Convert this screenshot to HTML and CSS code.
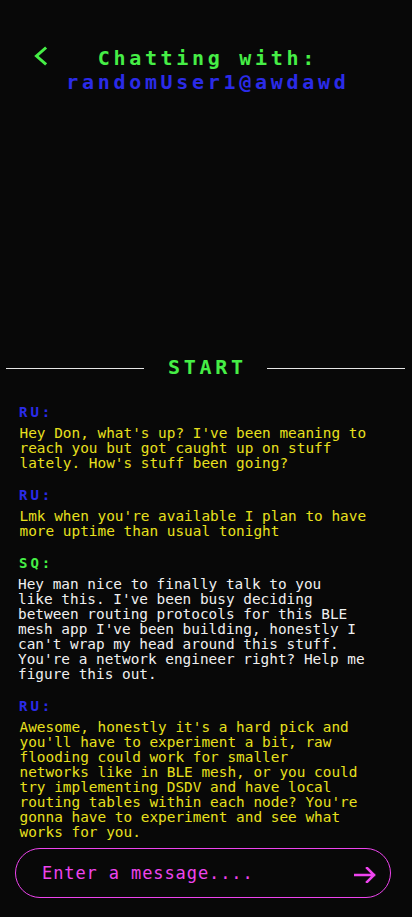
FILE: index.html
```html
<!DOCTYPE html>
<html lang="en">
<head>
<meta charset="utf-8">
<title>Chat</title>
<link rel="stylesheet" href="styles.css">
</head>
<body>
<div class="app">
  <header class="header">
    <button class="back" aria-label="Back">
      <svg width="14" height="20" viewBox="0 0 14 20"><polyline points="12,2.5 3.5,10 12,17.5" fill="none" stroke="#46ee46" stroke-width="3" stroke-linecap="square" stroke-linejoin="miter"/></svg>
    </button>
    <div class="title">
      <div class="title-top">Chatting with:</div>
      <div class="title-user">randomUser1@awdawd</div>
    </div>
    <div class="spacer"></div>
  </header>

  <main class="chat">
    <div class="start-row">
      <span class="rule"></span>
      <span class="start">START</span>
      <span class="rule"></span>
    </div>
    <div class="messages">
      <div class="msg">
        <div class="sender sender-ru">RU:</div>
        <p class="text text-them">Hey Don, what's up? I've been meaning to<br>reach you but got caught up on stuff<br>lately. How's stuff been going?</p>
      </div>
      <div class="msg">
        <div class="sender sender-ru">RU:</div>
        <p class="text text-them">Lmk when you're available I plan to have<br>more uptime than usual tonight</p>
      </div>
      <div class="msg">
        <div class="sender sender-sq">SQ:</div>
        <p class="text text-me">Hey man nice to finally talk to you<br>like this. I've been busy deciding<br>between routing protocols for this BLE<br>mesh app I've been building, honestly I<br>can't wrap my head around this stuff.<br>You're a network engineer right? Help me<br>figure this out.</p>
      </div>
      <div class="msg">
        <div class="sender sender-ru">RU:</div>
        <p class="text text-them">Awesome, honestly it's a hard pick and<br>you'll have to experiment a bit, raw<br>flooding could work for smaller<br>networks like in BLE mesh, or you could<br>try implementing DSDV and have local<br>routing tables within each node? You're<br>gonna have to experiment and see what<br>works for you.</p>
      </div>
    </div>
  </main>

  <footer class="composer">
    <div class="input-wrap">
      <input class="input" type="text" placeholder="Enter a message....">
      <button class="send" aria-label="Send">
        <svg width="22" height="16" viewBox="0 0 22 16"><path d="M0.5 8 H20 M13 1 L20 8 L13 15" fill="none" stroke="#ee44ee" stroke-width="2.5" stroke-linecap="square" stroke-linejoin="miter"/></svg>
      </button>
    </div>
  </footer>
</div>
</body>
</html>
```

FILE: styles.css
```css
* { box-sizing: border-box; }

html, body {
  margin: 0;
  padding: 0;
  background: #080808;
}

body {
  font-family: "DejaVu Sans Mono", "Liberation Mono", monospace;
}

.app {
  height: 100vh;
  display: flex;
  flex-direction: column;
}

.header {
  display: grid;
  grid-template-columns: 1fr auto 1fr;
  align-items: start;
  padding-top: 46px;
}

.back {
  justify-self: start;
  margin-left: 33px;
  margin-top: 0;
  padding: 0;
  border: 0;
  background: none;
  width: 14px;
  height: 20px;
  display: block;
}

.back svg { display: block; }

.title {
  text-align: center;
  font-weight: bold;
  font-size: 20px;
  line-height: 24px;
  letter-spacing: 3.7px;
  padding-left: 3.7px;
}

.title-top { color: #46ee46; }
.title-user { color: #2b2be8; }

.chat {
  flex: 1;
  display: flex;
  flex-direction: column;
  justify-content: flex-end;
}

.start-row {
  display: flex;
  align-items: center;
  padding: 0 7px 0 6px;
  margin-bottom: 25px;
}

.rule {
  flex: 1;
  height: 1px;
  background: #e6e6e6;
  margin-top: 2px;
}

.start {
  margin: 0 20px;
  padding-left: 3.7px;
  color: #46ee46;
  font-weight: bold;
  font-size: 20px;
  line-height: 24px;
  letter-spacing: 3.7px;
}

.messages {
  display: flex;
  flex-direction: column;
  gap: 16px;
  padding-left: 18px;
}

.sender {
  font-weight: bold;
  font-size: 14px;
  line-height: 16px;
  letter-spacing: 3px;
  margin-bottom: 6px;
  padding-left: 1px;
}

.sender-ru { color: #2b2be8; }
.sender-sq { color: #46ee46; }

.text {
  margin: 0;
  font-size: 14.4px;
  line-height: 15px;
  white-space: nowrap;
}

.text-them { color: #e8e01e; padding-left: 1.5px; }
.text-me { color: #f0f0f0; }

.composer {
  padding: 8px 21px 19px 15px;
}

.input-wrap {
  height: 50px;
  border: 1px solid #ee44ee;
  border-radius: 25px;
  display: flex;
  align-items: center;
  padding: 0 14px 0 26px;
}

.input {
  flex: 1;
  min-width: 0;
  background: transparent;
  border: 0;
  outline: none;
  color: #ee44ee;
  font-family: "DejaVu Sans Mono", "Liberation Mono", monospace;
  font-size: 17px;
  letter-spacing: 0.9px;
  padding: 0;
}

.input::placeholder {
  color: #ee44ee;
  opacity: 1;
}

.send {
  padding: 0;
  border: 0;
  background: none;
  display: block;
  margin-top: 3px;
}

.send svg { display: block; }
```
